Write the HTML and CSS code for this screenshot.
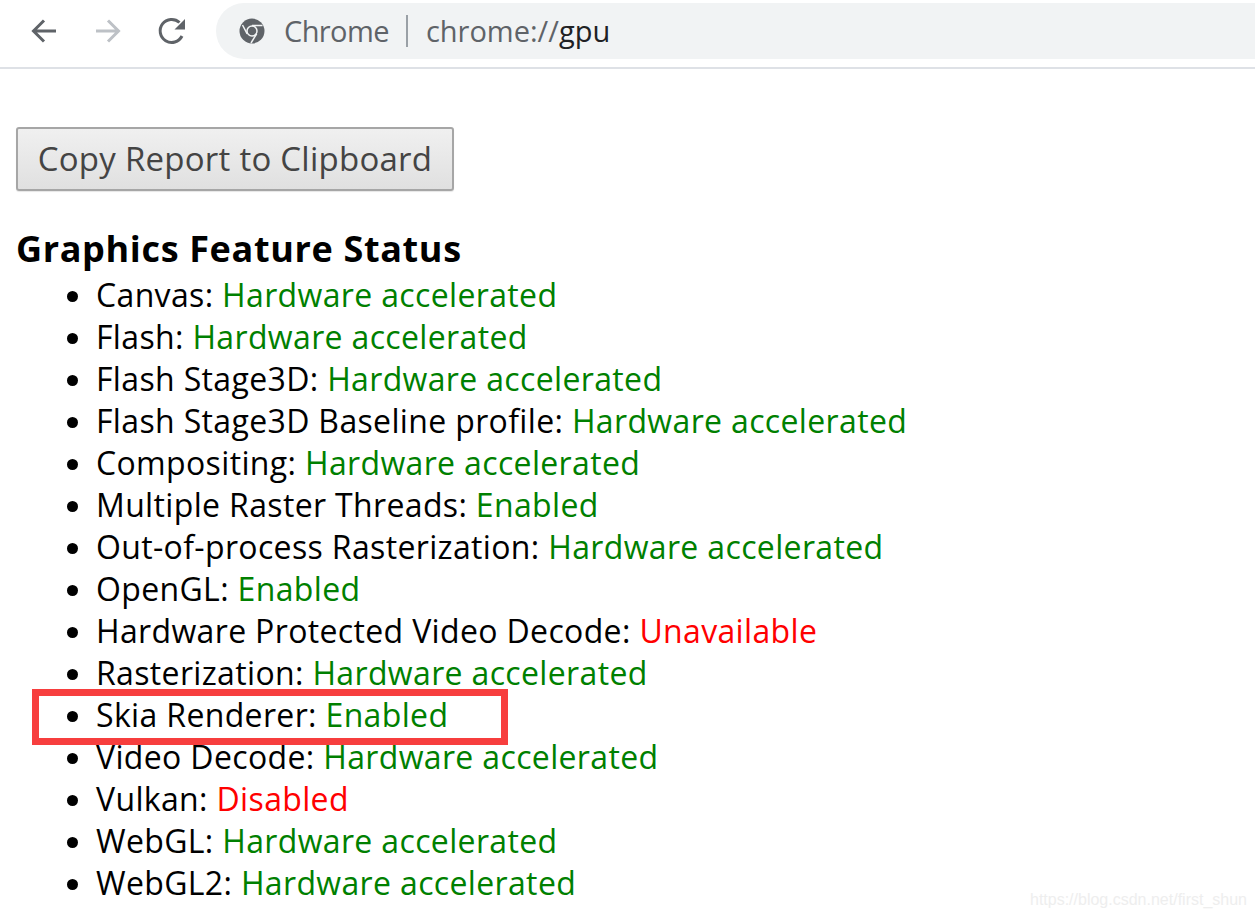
FILE: index.html
```html
<!DOCTYPE html>
<html lang="en">
<head>
<meta charset="utf-8">
<title>chrome://gpu</title>
<link rel="stylesheet" href="styles.css">
</head>
<body>
<header class="toolbar">
  <svg class="nav nav-back" viewBox="0 0 30 30"><path d="M27 15H5M15 4.500 4.500 15 15 25.500" fill="none" stroke="#5f6368" stroke-width="3"/></svg>
  <svg class="nav nav-forward" viewBox="0 0 30 30"><path d="M3 15h22M15 4.500 25.500 15 15 25.500" fill="none" stroke="#bdc1c6" stroke-width="3"/></svg>
  <svg class="nav nav-reload" viewBox="0 0 30 30"><path d="M25 20A11.500 11.500 0 1 1 22.500 6.500" fill="none" stroke="#5f6368" stroke-width="3"/><path d="M17.500 13.500H28V3z" fill="#5f6368"/></svg>
  <div class="omnibox">
    <svg class="chrome-icon" viewBox="0 0 26 26"><circle cx="13" cy="13" r="12.500" fill="#5f6368"/><circle cx="13" cy="13" r="5" fill="#5f6368" stroke="#f1f3f4" stroke-width="1.500"/><path d="M13 7.500h10.500M8.200 15.800 3.500 7M17.700 15.800 12 25" stroke="#f1f3f4" stroke-width="1.500" fill="none"/></svg>
    <span class="origin">Chrome</span>
    <span class="divider"></span>
    <span class="url"><span class="scheme">chrome://</span>gpu</span>
  </div>
</header>
<main class="page">
  <button class="copy" type="button">Copy Report to Clipboard</button>
  <h3 class="title">Graphics Feature Status</h3>
  <ul class="features">
    <li>Canvas: <span class="ok">Hardware accelerated</span></li>
    <li>Flash: <span class="ok">Hardware accelerated</span></li>
    <li>Flash Stage3D: <span class="ok">Hardware accelerated</span></li>
    <li>Flash Stage3D Baseline profile: <span class="ok">Hardware accelerated</span></li>
    <li>Compositing: <span class="ok">Hardware accelerated</span></li>
    <li>Multiple Raster Threads: <span class="ok">Enabled</span></li>
    <li>Out-of-process Rasterization: <span class="ok">Hardware accelerated</span></li>
    <li>OpenGL: <span class="ok">Enabled</span></li>
    <li>Hardware Protected Video Decode: <span class="bad">Unavailable</span></li>
    <li>Rasterization: <span class="ok">Hardware accelerated</span></li>
    <li class="marked">Skia Renderer: <span class="ok">Enabled</span><span class="highlight"></span></li>
    <li>Video Decode: <span class="ok">Hardware accelerated</span></li>
    <li>Vulkan: <span class="bad">Disabled</span></li>
    <li>WebGL: <span class="ok">Hardware accelerated</span></li>
    <li>WebGL2: <span class="ok">Hardware accelerated</span></li>
  </ul>
</main>
<div class="watermark">https://blog.csdn.net/first_shun</div>
</body>
</html>
```
FILE: styles.css
```css
html, body {
  margin: 0;
  height: 918px;
  overflow: hidden;
  background: #fff;
  font-family: "Open Sans", "Noto Sans", sans-serif;
}
body { position: relative; }
.toolbar {
  height: 62px;
  border-bottom: 2px solid #dee1e6;
  display: flex;
  align-items: center;
  padding: 0 0 5px 29px;
}
.nav { width: 30px; height: 30px; flex: none; }
.nav-forward { margin-left: 34px; }
.nav-reload { margin-left: 34px; }
.omnibox {
  margin-left: 29px;
  flex: 1;
  height: 56px;
  border-radius: 28px 0 0 28px;
  background: #f1f3f4;
  display: flex;
  align-items: center;
  padding-left: 23px;
  font-size: 29px;
  letter-spacing: -0.6px;
  color: #5f6368;
}
.chrome-icon { width: 26px; height: 26px; flex: none; }
.origin { margin: 0 0 2px 19px; }
.divider { width: 2px; height: 32px; background: #9aa0a6; margin: 0 18px 0 17px; }
.url { color: #202124; letter-spacing: 0; margin-bottom: 2px; }
.scheme { color: #5f6368; }
.page { padding: 58px 16px 0; }
.copy {
  display: block;
  width: 438px;
  height: 64px;
  padding: 0 0 2px;
  border: 2px solid #a6a6a6;
  border-radius: 3px;
  background: linear-gradient(#f0f0f0, #e0e0e0);
  box-shadow: 0 1px 1px rgba(0,0,0,.1);
  font: inherit;
  font-size: 33px;
  letter-spacing: 0.25px;
  color: #444;
}
.title {
  margin: 34px 0 0;
  padding-bottom: 1px;
  font-size: 36px;
  line-height: 48px;
  font-weight: 700;
  letter-spacing: 0.65px;
  color: #000;
}
.features {
  margin: 0;
  padding: 0 0 0 80px;
  list-style: disc;
  font-size: 32px;
  line-height: 42px;
  letter-spacing: 0.35px;
  color: #000;
}
.ok { color: #008000; }
.bad { color: #f00; }
.marked { position: relative; }
.highlight {
  position: absolute;
  left: -64px;
  top: -5px;
  width: 476px;
  height: 56px;
  box-sizing: border-box;
  border: 7px solid #f73e3e;
  pointer-events: none;
}
.watermark {
  position: absolute;
  right: 8px;
  top: 891px;
  font-family: "Liberation Sans", sans-serif;
  font-size: 16px;
  color: #eeeeee;
}
```
